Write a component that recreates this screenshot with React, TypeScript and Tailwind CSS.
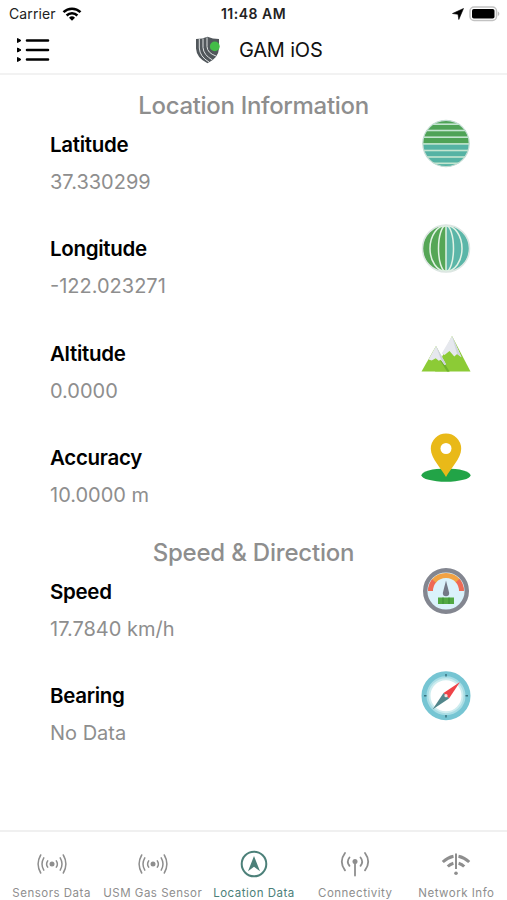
import type { ReactNode } from 'react'

const LatitudeIcon = () => (
  <svg width="50" height="50" viewBox="0 0 50 50">
    <clipPath id="lat-globe"><circle cx="25" cy="24.5" r="23.2" /></clipPath>
    <g clipPath="url(#lat-globe)">
      <rect width="50" height="25" fill="#4fa357" />
      <rect y="25" width="50" height="25" fill="#55b3a4" />
      {[5.2, 11.5, 18.2, 24.9, 31.5, 38, 44.3].map((y) => (
        <rect key={y} y={y - 0.8} width="50" height="1.6" fill="#c3e5d0" />
      ))}
    </g>
    <circle cx="25" cy="24.5" r="23.2" fill="none" stroke="#c3dcd3" strokeWidth="1.2" />
  </svg>
)

const LongitudeIcon = () => (
  <svg width="50" height="50" viewBox="0 0 50 50">
    <path d="M25 1.3a23.2 23.2 0 0 0 0 46.4z" fill="#55a656" />
    <path d="M25 1.3a23.2 23.2 0 0 1 0 46.4z" fill="#5bb6a8" />
    <g fill="none" stroke="#e1f2e4" strokeWidth="1.5">
      <path d="M25 1.5v46" />
      <ellipse cx="25" cy="24.5" rx="7.5" ry="23" />
      <ellipse cx="25" cy="24.5" rx="16" ry="23" />
    </g>
    <circle cx="25" cy="24.5" r="23.5" fill="none" stroke="#dce6e2" strokeWidth="1.5" />
  </svg>
)

const AltitudeIcon = () => (
  <svg width="50" height="50" viewBox="0 0 50 50">
    <path d="M31 8L14 43.5h35.5z" fill="#8ccb36" />
    <path d="M15 18L.5 43.5h28l-4-8z" fill="#8ccb36" />
    <path d="M21.5 32l7 11.5h-2.5L19.5 33z" fill="#6fb02d" />
    <path d="M31 8l-10.3 17.5 2.8 1.6 5-4 4.8 5.5 2.8-2.5 4.4 3.2z" fill="#e6e8ee" />
    <path d="M31 8l9.5 21.3-4.4-3.2-1.8-6.2z" fill="#d0d5df" />
    <path d="M15 18L7.5 31.5l3.2 1 4-2.3 3 2.6 2-1 3.8 5.2 1.5-.8z" fill="#e6e8ee" />
    <path d="M15 18l10 18.2-1.5.8-4-7z" fill="#ccd1dc" />
  </svg>
)

const AccuracyIcon = () => (
  <svg width="50" height="50" viewBox="0 0 50 50">
    <ellipse cx="25" cy="42.2" rx="24.5" ry="6.6" fill="#22a447" />
    <path d="M25 44C21 36 9.8 25.5 9.8 15.7a15.2 15.2 0 0 1 30.4 0C40.2 25.5 29 36 25 44z" fill="#e9b918" />
    <circle cx="25" cy="15.5" r="5.5" fill="#fff" />
  </svg>
)

const SpeedIcon = () => (
  <svg width="50" height="50" viewBox="0 0 50 50">
    <circle cx="25" cy="25" r="20.8" fill="#daf2fb" stroke="#838690" strokeWidth="4.4" />
    <g fill="none" strokeWidth="5">
      <path d="M9.5 25A15.8 15.8 0 0 1 13.3 14.5" stroke="#ef6a55" />
      <path d="M13 15A15.8 15.8 0 0 1 37 15" stroke="#f2a243" />
      <path d="M36.7 14.5A15.8 15.8 0 0 1 40.5 25" stroke="#ef6a55" />
    </g>
    <path d="M25 14.5l3.2 12.5a3.2 3.2 0 0 1-6.4 0z" fill="#737987" />
    <rect x="17" y="31.5" width="16" height="6.5" fill="#51a943" />
    <path d="M22 31.5v6.5M28 31.5v6.5" stroke="#388c37" />
  </svg>
)

const BearingIcon = () => (
  <svg width="50" height="50" viewBox="0 0 50 50">
    <circle cx="25" cy="24.7" r="22" fill="#a9dde5" stroke="#76c5d3" strokeWidth="5" />
    <circle cx="25" cy="24.7" r="16.5" fill="#fff" stroke="#cdecef" strokeWidth="2" />
    <path d="M25 3v2.5M25 44v2.5M3 24.7h2.5M44.5 24.7h2.5" stroke="#39727f" strokeWidth="1.5" />
    <path d="M39 11L22.5 22l5.5 5.5z" fill="#ef4348" />
    <path d="M11.5 38.5L22.5 22l5.5 5.5z" fill="#52868b" />
    <circle cx="25" cy="24.7" r="1.6" fill="#f6dedd" />
  </svg>
)

const WavesIcon = () => (
  <svg width="30" height="22" viewBox="0 0 30 22" fill="none" stroke="currentColor" strokeWidth="1.5" strokeLinecap="round">
    <circle cx="15" cy="11" r="2.5" fill="currentColor" stroke="none" />
    <path d="M10.7 7.8q-2.2 3.2 0 6.4M19.3 7.8q2.2 3.2 0 6.4" />
    <path d="M6.8 4.8q-3.6 6.2 0 12.4M23.2 4.8q3.6 6.2 0 12.4" />
    <path d="M3.7 2q-5.2 9 0 18M26.3 2q5.2 9 0 18" />
  </svg>
)

const NavigationIcon = () => (
  <svg width="28" height="28" viewBox="0 0 28 28">
    <circle cx="14" cy="14" r="12.3" fill="none" stroke="currentColor" strokeWidth="2" />
    <path d="M14 6l6 15.2-6-4.4-6 4.4z" fill="currentColor" />
  </svg>
)

const AntennaIcon = () => (
  <svg width="30" height="26" viewBox="0 0 30 26" fill="none" stroke="currentColor" strokeWidth="1.8" strokeLinecap="round">
    <circle cx="15" cy="10.5" r="2.5" fill="currentColor" stroke="none" />
    <path d="M15 10.5v14" />
    <path d="M9.5 6.5q-3.4 4.2 0 8.4M20.5 6.5q3.4 4.2 0 8.4" />
    <path d="M5 2q-6.4 8.7 0 17.4M25 2q6.4 8.7 0 17.4" />
  </svg>
)

const NetworkIcon = () => (
  <svg width="30" height="24" viewBox="0 0 30 24" fill="none" stroke="currentColor" strokeWidth="3">
    <path d="M1.8 10Q6.5 5.5 12.5 4.3M17.5 4.3Q23.5 5.5 28.2 10" />
    <path d="M6.8 14.5Q9 12.2 12.4 11.2M17.6 11.2Q21 12.2 23.2 14.5" />
    <path d="M15 1.5v15.5" strokeWidth="2" />
    <circle cx="15" cy="21.3" r="1.8" fill="currentColor" stroke="none" />
  </svg>
)

const ShieldLogo = () => (
  <svg width="26" height="28" viewBox="0 0 26 28">
    <path d="M1 3Q7.5 3 12.5.8 17.5 3 24 3v9.5Q23.5 22 12.5 27.2 1.5 22 1 12.5z" fill="#51575b" />
    <g fill="none" stroke="#dfe2e3" strokeWidth="1">
      <path d="M4.3 2.8v9.2q.5 8.7 9.7 14" />
      <path d="M8 2.5v9q.5 7.5 9.5 12.5" />
      <path d="M12 1.5v9q.3 6.5 9 9.5" />
    </g>
    <circle cx="19.8" cy="10.4" r="4.9" fill="#43bc47" />
  </svg>
)

const LOCATION = [
  { label: 'Latitude', value: '37.330299', icon: <LatitudeIcon /> },
  { label: 'Longitude', value: '-122.023271', icon: <LongitudeIcon /> },
  { label: 'Altitude', value: '0.0000', icon: <AltitudeIcon /> },
  { label: 'Accuracy', value: '10.0000 m', icon: <AccuracyIcon /> },
]

const MOTION = [
  { label: 'Speed', value: '17.7840 km/h', icon: <SpeedIcon /> },
  { label: 'Bearing', value: 'No Data', icon: <BearingIcon /> },
]

const TABS = [
  { label: 'Sensors Data', icon: <WavesIcon /> },
  { label: 'USM Gas Sensor', icon: <WavesIcon /> },
  { label: 'Location Data', icon: <NavigationIcon />, active: true },
  { label: 'Connectivity', icon: <AntennaIcon /> },
  { label: 'Network Info', icon: <NetworkIcon /> },
]

function Reading({ label, value, icon }: { label: string; value: string; icon: ReactNode }) {
  return (
    <div className="flex h-[104.5px] items-start justify-between pl-[50px] pr-9">
      <div className="pt-[12.5px]">
        <h3 className="h-[37px] text-[20.5px] leading-[25px] font-semibold tracking-[-0.3px] text-black">{label}</h3>
        <p className="text-[20px] leading-[27px] text-[#8e8e8e]">{value}</p>
      </div>
      {icon}
    </div>
  )
}

export default function App() {
  return (
    <div className="flex h-[900px] w-[507px] flex-col overflow-hidden bg-white font-['Inter',sans-serif]">
      <header className="h-[75px] border-b-2 border-[#f2f2f2]">
        {/* Status bar */}
        <div className="grid h-[27px] grid-cols-3 items-center px-[9px] text-[14px] text-[#222]">
          <div className="flex items-center gap-1.5">
            <span className="tracking-[0.1px]">Carrier</span>
            <svg width="20" height="14" viewBox="0 0 20 14" fill="none" stroke="#000" strokeWidth="2.5">
              <path d="M1.5 5.2a12.2 12.2 0 0 1 17 0M4.6 8.5a7.8 7.8 0 0 1 10.8 0" />
              <path d="M7 10.8a4.3 4.3 0 0 1 6 0l-3 3z" fill="#000" stroke="none" />
            </svg>
          </div>
          <span className="text-center font-semibold tracking-[0.5px]">11:48 AM</span>
          <div className="flex items-center justify-end gap-[5px]">
            <svg width="12" height="12" viewBox="0 0 12 12">
              <path d="M11.5.5L6.8 11.5 6 6.3.5 5.5z" fill="#000" stroke="#000" strokeWidth=".6" />
            </svg>
            <svg className="-mr-0.5" width="31" height="16" viewBox="0 0 31 16">
              <rect x="1" y="1" width="26.5" height="13.5" rx="4" fill="#fff" stroke="#c2c2c2" strokeWidth="1.5" />
              <rect x="3" y="3" width="22.5" height="9.5" rx="1.8" fill="#000" />
              <path d="M28.8 5.3q3.2 2.5 0 5z" fill="#bbb" />
            </svg>
          </div>
        </div>
        <div className="grid h-[46px] grid-cols-[195px_1fr] items-center">
          <svg className="ml-4" width="34" height="26" viewBox="0 0 34 26">
            <path d="M11 3.5h21M11 13h21M11 22.5h21" stroke="#000" strokeWidth="2.6" strokeLinecap="round" />
            <path d="M1.5 1.5l3.5 2-3.5 2zM1.5 11l3.5 2-3.5 2zM1.5 20.5l3.5 2-3.5 2z" fill="#000" stroke="#000" />
          </svg>
          <div className="flex items-center gap-[18px]">
            <ShieldLogo />
            <h1 className="text-[20px] tracking-[-0.2px] text-[#111]">GAM iOS</h1>
          </div>
        </div>
      </header>

      <main className="flex-1 pt-4">
        <h2 className="pt-px text-center text-[24px] leading-[27px] font-medium tracking-[-0.32px] text-[#8e8e8e]">Location Information</h2>
        {LOCATION.map((r) => <Reading key={r.label} {...r} />)}
        <h2 className="mt-px pt-px text-center text-[24px] leading-[27px] font-medium tracking-[-0.2px] text-[#8e8e8e]">Speed &amp; Direction</h2>
        {MOTION.map((r) => <Reading key={r.label} {...r} />)}
      </main>

      <nav className="grid h-[70px] grid-cols-5 border-t-2 border-[#f0f0f0] pl-px">
        {TABS.map((t) => (
          <div key={t.label} className={`flex flex-col items-center whitespace-nowrap ${t.active ? 'text-[#4c8079]' : 'text-[#8e8e8e]'}`}>
            <div className="flex h-[54px] items-center pt-2.5">{t.icon}</div>
            <span className="text-[11.5px] leading-[15px] tracking-[0.5px]">{t.label}</span>
          </div>
        ))}
      </nav>
    </div>
  )
}
